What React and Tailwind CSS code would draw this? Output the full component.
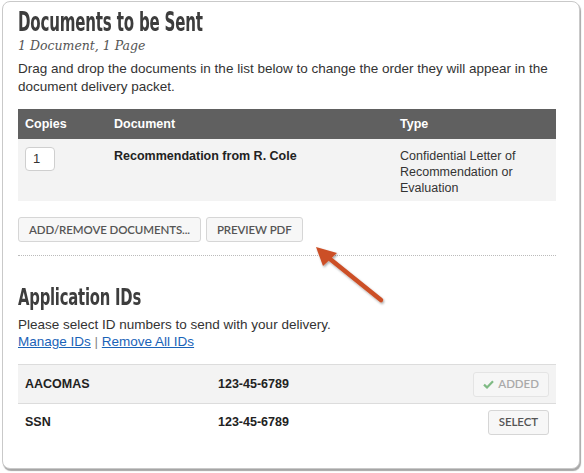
import React from "react";

const btn =
  "rounded-[3px] border border-[#d6d6d6] bg-[#f7f7f7] px-[10px] h-[25px] text-[11.5px] font-semibold tracking-[-0.1px] text-[#555] font-['Lato',sans-serif] leading-none";

function Check() {
  return (
    <svg width="11" height="9" viewBox="0 0 11 9" className="mr-[4px]">
      <path d="M1 4.6 L4 7.4 L10 1.2" fill="none" stroke="#7fba84" strokeWidth="2.2" />
    </svg>
  );
}

export default function App() {
  return (
    <div className="relative h-[473px] w-[584px] bg-white pl-[2px] pt-[1px] font-['Liberation_Sans',Arial,sans-serif]">
      <div className="h-[468px] w-[578px] rounded-[8px] border border-[#c9c9c9] bg-white px-[15px] shadow-[1px_2px_1px_rgba(0,0,0,0.35)]">
        {/* Documents */}
        <h1 className="mt-[5px] h-[30px] origin-left scale-x-[0.62] whitespace-nowrap font-['DejaVu_Sans_Condensed',sans-serif] text-[27px] font-bold leading-[30px] tracking-[-0.3px] text-[#3d3d3d]">
          Documents to be Sent
        </h1>
        <p className="mt-[1px] font-['DejaVu_Serif','Liberation_Serif',serif] text-[12.5px] italic leading-[16px] text-[#555]">
          1 Document, 1 Page
        </p>
        <p className="mt-[6px] text-[13.5px] leading-[18px] text-[#333]">
          Drag and drop the documents in the list below to change the order they will appear in the document delivery packet.
        </p>

        <div className="mt-[13px] w-[538px]">
          <div className="grid h-[30px] grid-cols-[89px_286px_1fr] items-center bg-[#606060] text-[12.5px] font-bold text-white">
            <div className="pl-[7px]">Copies</div>
            <div className="pl-[7px]">Document</div>
            <div className="pl-[7px]">Type</div>
          </div>
          <div className="grid h-[62px] grid-cols-[89px_286px_1fr] bg-[#f3f3f3] pt-[8px] text-[12.5px] leading-[16px] text-[#222]">
            <div className="pl-[7px]">
              <div className="flex h-[24px] w-[30px] items-center rounded-[4px] border border-[#cfcfcf] bg-white pl-[7px] text-[13px] text-[#333]">
                1
              </div>
            </div>
            <div className="pl-[7px] pt-[1px] font-bold">Recommendation from R. Cole</div>
            <div className="pl-[7px] pt-[1px] text-[#333]">
              Confidential Letter of
              <br />
              Recommendation or
              <br />
              Evaluation
            </div>
          </div>
        </div>

        <div className="mt-[16px] flex gap-[5px]">
          <button className={btn}>ADD/REMOVE DOCUMENTS...</button>
          <button className={btn}>PREVIEW PDF</button>
        </div>

        <div className="mt-[13px] w-[538px] border-t border-dotted border-[#bbb]" />

        {/* Application IDs */}
        <h2 className="mt-[28px] h-[26px] origin-left scale-x-[0.7] whitespace-nowrap font-['DejaVu_Sans_Condensed',sans-serif] text-[23.5px] font-bold leading-[26px] tracking-[-0.3px] text-[#3d3d3d]">
          Application IDs
        </h2>
        <p className="mt-[6px] text-[13.5px] leading-[17px] text-[#333]">
          Please select ID numbers to send with your delivery.
        </p>
        <p className="text-[13.5px] leading-[17px] text-[#888]">
          <a className="text-[#1a63b8] underline">Manage IDs</a> | <a className="text-[#1a63b8] underline">Remove All IDs</a>
        </p>

        <div className="mt-[14px] w-[538px] text-[12.5px] font-bold text-[#222]">
          <div className="grid h-[40px] grid-cols-[193px_1fr_auto] items-center border-y border-[#dcdcdc] bg-[#f3f3f3] pl-[7px] pr-[7px]">
            <div>AACOMAS</div>
            <div>123-45-6789</div>
            <button className="flex h-[25px] items-center rounded-[3px] border border-[#e4e4e4] bg-[#f6f6f6] px-[9px] font-['Lato',sans-serif] text-[11.5px] font-semibold text-[#aaa]">
              <Check />
              ADDED
            </button>
          </div>
          <div className="grid h-[36px] grid-cols-[193px_1fr_auto] items-center pl-[7px] pr-[7px]">
            <div>SSN</div>
            <div>123-45-6789</div>
            <button className={btn}>SELECT</button>
          </div>
        </div>
      </div>

      {/* annotation arrow */}
      <svg className="pointer-events-none absolute left-0 top-0" width="584" height="473">
        <defs>
          <filter id="sh" x="-20%" y="-20%" width="140%" height="140%">
            <feDropShadow dx="1" dy="1.5" stdDeviation="1" floodColor="#000" floodOpacity="0.35" />
          </filter>
        </defs>
        <g filter="url(#sh)">
          <line x1="381" y1="300" x2="330" y2="259" stroke="#cc4f27" strokeWidth="4.5" strokeLinecap="round" />
          <polygon points="316,247 337,253 323,266" fill="#cc4f27" />
        </g>
      </svg>
    </div>
  );
}
